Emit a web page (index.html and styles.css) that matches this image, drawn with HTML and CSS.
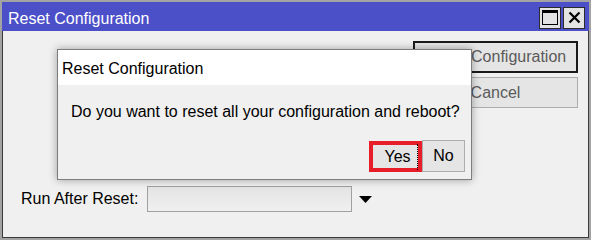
FILE: index.html
```html
<!DOCTYPE html>
<html lang="en">
<head>
  <meta charset="UTF-8">
  <title>Reset Configuration</title>
  <link rel="stylesheet" href="styles.css">
</head>
<body>
  <div class="window">
    <div class="titlebar">
      <span class="title">Reset Configuration</span>
      <div class="tb-btns">
        <span class="tb-btn max"></span>
        <span class="tb-btn close">
          <svg width="13" height="13" viewBox="0 0 13 13"><path d="M1.5 1.5 L11.5 11.5 M11.5 1.5 L1.5 11.5" stroke="#000" stroke-width="2.2"/></svg>
        </span>
      </div>
    </div>
    <div class="body">
      <div class="actions">
        <button class="btn default">Reset Configuration</button>
        <button class="btn">Cancel</button>
      </div>
      <div class="field-row">
        <label>Run After Reset:</label>
        <div class="select-box"></div>
        <svg class="arrow" width="13" height="7" viewBox="0 0 13 7"><path d="M0 0 H13 L6.5 7 Z" fill="#000"/></svg>
      </div>

      <div class="dialog">
        <div class="dialog-head">Reset Configuration</div>
        <div class="dialog-msg">Do you want to reset all your configuration and reboot?</div>
        <div class="dialog-btns">
          <button class="dbtn yes"><span>Yes</span></button>
          <button class="dbtn">No</button>
        </div>
      </div>
    </div>
  </div>
</body>
</html>
```

FILE: styles.css
```css
body {
  margin: 0;
  font-family: "Liberation Sans", Arial, sans-serif;
  font-size: 16px;
  background-color: #9e9e9e;
}
.window {
  width: 591px;
  height: 240px;
  box-sizing: border-box;
  border: 2px solid #a3a3a3;
  display: flex;
  flex-direction: column;
}
.titlebar {
  height: 29px;
  background-color: #4b4fc8;
  display: flex;
  align-items: center;
  justify-content: space-between;
  padding: 0 4px 0 6px;
}
.title {
  color: #fff;
  padding-top: 4px;
}
.tb-btns {
  display: flex;
  gap: 2px;
  padding-top: 2px;
}
.tb-btn {
  width: 22px;
  height: 22px;
  box-sizing: border-box;
  border: 1px solid #2b2b2b;
  background-color: #e3e3e3;
  display: flex;
  align-items: center;
  justify-content: center;
}
.tb-btn.max::before {
  content: "";
  width: 16px;
  height: 15px;
  box-sizing: border-box;
  border: 1px solid #000;
  border-top-width: 3px;
}
.body {
  flex: 1;
  position: relative;
  background-color: #f0f0f0;
  border: 1px solid #3a3a3a;
  border-top: none;
  padding: 10px 10px 0 18px;
  display: flex;
  flex-direction: column;
}
.actions {
  align-self: flex-end;
  width: 165px;
  display: flex;
  flex-direction: column;
  gap: 4px;
}
.btn {
  height: 31px;
  font-family: inherit;
  font-size: 16px;
  color: #5a5a5a;
  background-color: #e5e5e5;
  border: 1px solid #adadad;
  padding: 0;
}
.btn.default {
  border: 2px solid #1a1a1a;
  height: 32px;
}
.field-row {
  margin-top: 78px;
  display: flex;
  align-items: center;
}
.field-row label {
  color: #000;
  width: 126px;
}
.select-box {
  width: 205px;
  height: 26px;
  box-sizing: border-box;
  border: 1px solid #a0a0a0;
  background: linear-gradient(#e4e4e4, #f0f0f0);
  margin-right: 7px;
}
.dialog {
  position: absolute;
  left: 54px;
  top: 18px;
  width: 415px;
  height: 131px;
  box-sizing: border-box;
  border: 1px solid #7d7d7d;
  background-color: #f0f0f0;
  box-shadow: 0 0 8px rgba(0, 0, 0, 0.35);
  display: flex;
  flex-direction: column;
}
.dialog-head {
  height: 35px;
  background-color: #fff;
  padding-left: 4px;
  display: flex;
  align-items: center;
  padding-top: 2px;
  box-sizing: border-box;
}
.dialog-msg {
  padding: 18px 0 0 13px;
}
.dialog-btns {
  margin-top: auto;
  display: flex;
  justify-content: flex-end;
  padding: 0 6px 7px 0;
  align-items: flex-end;
}
.dbtn {
  height: 32px;
  width: 43px;
  font-family: inherit;
  font-size: 16px;
  color: #000;
  background-color: #e5e5e5;
  border: 1px solid #adadad;
  padding: 0;
}
.dbtn.yes {
  width: 53px;
  height: 31px;
  border: 4px solid #e81d2a;
  background-color: #e5e5e5;
  display: flex;
  align-items: center;
  justify-content: center;
}
.dbtn.yes span {
  border-right: 1px dotted #000;
  padding: 4px 6px 4px 9px;
  margin-left: 2px;
}
```
